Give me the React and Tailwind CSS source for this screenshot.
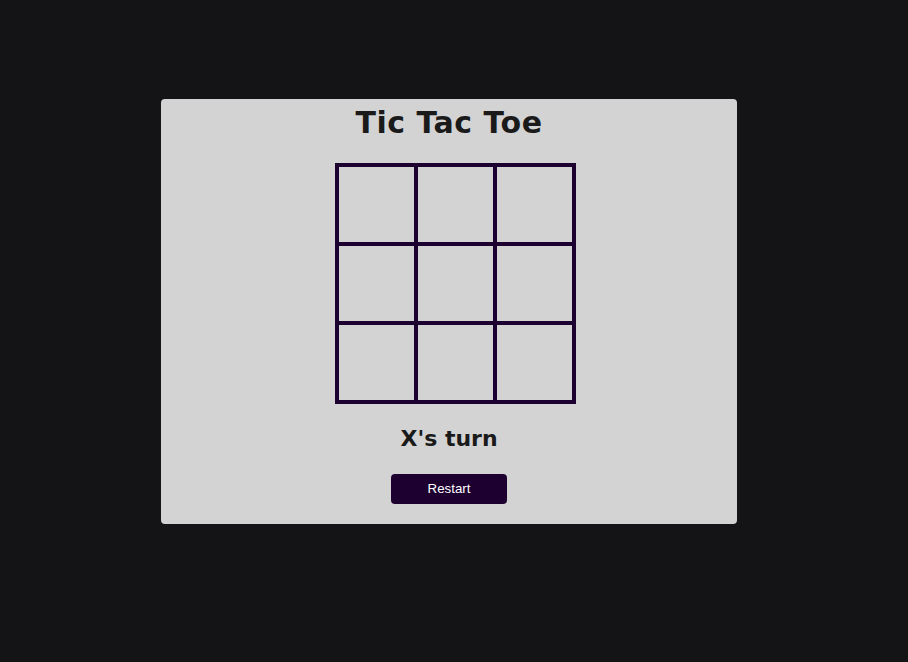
import React, { useState } from "react";

const App = () => {
  const [cells, setCells] = useState(Array(9).fill(""));
  const [turn, setTurn] = useState("X");

  const play = (i) => {
    if (cells[i]) return;
    const next = [...cells];
    next[i] = turn;
    setCells(next);
    setTurn(turn === "X" ? "O" : "X");
  };

  const restart = () => {
    setCells(Array(9).fill(""));
    setTurn("X");
  };

  return (
    <div className="min-h-screen bg-[#141416] flex justify-center pt-[99px] pr-[10px]">
      <div className="w-[576px] h-[425px] bg-[#d3d3d3] rounded-[4px] flex flex-col items-center font-['Comic_Sans_MS','DejaVu_Sans',sans-serif] text-[#1a1a1a]">
        <h1 className="text-[30px] font-bold leading-[48px] tracking-[0.5px]">Tic Tac Toe</h1>
        <div className="mt-[16px] ml-[12px] grid grid-cols-[repeat(3,75px)] grid-rows-[repeat(3,75px)] gap-[4px] bg-[#1c0030] p-[4px]">
          {cells.map((c, i) => (
            <button
              key={i}
              onClick={() => play(i)}
              className="bg-[#d3d3d3] text-4xl font-bold text-[#1c0030]"
            >
              {c}
            </button>
          ))}
        </div>
        <p className="mt-[19px] text-[22px] font-bold leading-[32px]">{turn}'s turn</p>
        <button
          onClick={restart}
          className="mt-[19px] w-[116px] h-[30px] rounded-[4px] bg-[#1e0030] text-white text-[13.33px] font-['Liberation_Sans',Arial,sans-serif]"
        >
          Restart
        </button>
      </div>
    </div>
  );
};

export default App;
